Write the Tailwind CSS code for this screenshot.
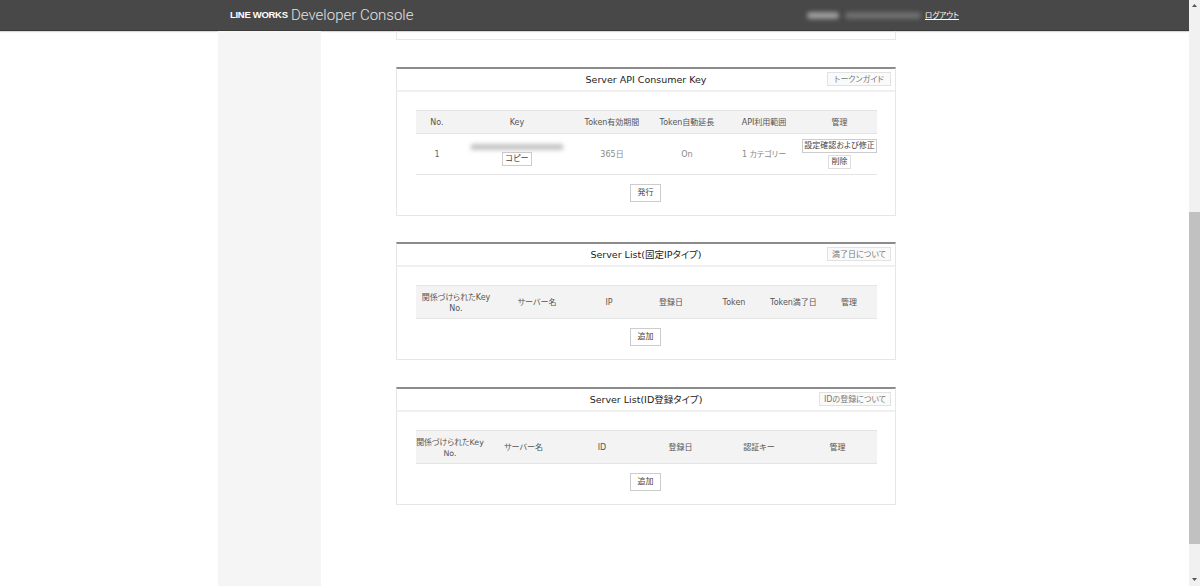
<!DOCTYPE html>
<html lang="ja">
<head>
    <meta charset="UTF-8">
    <title>LINE WORKS Developer Console</title>
    <script src="https://cdn.jsdelivr.net/npm/@tailwindcss/browser@4"></script>
</head>
<body class="bg-white overflow-hidden font-['DejaVu_Sans','Noto_Sans_CJK_JP',sans-serif] [font-feature-settings:'palt'] text-[8px] text-[#666]">
<div class="flex h-[586px] w-[1200px] overflow-hidden">
    <div class="w-[1189px] flex flex-col">
        <!-- Header -->
        <header class="h-[31px] shrink-0 bg-[#484848] border-b border-[#3a3a3a] flex items-center pl-[230px] pr-[230px] shadow-[0_1px_1px_rgba(0,0,0,0.15)]">
            <span class="pt-px font-['Liberation_Sans',sans-serif] font-bold text-[9.5px] tracking-[-0.3px] text-white w-[61px] whitespace-nowrap">LINE WORKS</span>
            <span class="font-['Roboto',sans-serif] font-light text-[15px] text-[#e4e4e4] whitespace-nowrap">Developer Console</span>
            <span class="ml-auto mr-[6px] w-[32px] h-[7px] rounded-sm bg-[#9a9a9a] blur-[2px]"></span>
            <span class="mr-[4px] w-[76px] h-[7px] rounded-sm bg-[#6e6e6e] blur-[2px]"></span>
            <a class="pt-px text-[7.6px] text-white underline whitespace-nowrap">ログアウト</a>
        </header>

        <div class="flex flex-1 min-h-0">
            <!-- Sidebar -->
            <aside class="ml-[218px] w-[103px] shrink-0 bg-[#f5f5f5]"></aside>

            <main class="ml-[75px] w-[500px]">
                <!-- Tail of the card scrolled out of view -->
                <div class="h-[9px] border border-t-0 border-[#e6e6e6]"></div>

                <!-- Server API Consumer Key -->
                <section class="mt-[27px] h-[149px] border border-t-2 border-[#e6e6e6] border-t-[#8c8c8c]">
                    <div class="h-[23px] border-b-2 border-[#f0f0f0] flex items-center relative">
                        <h2 class="w-full pt-px text-center text-[9.5px] text-[#222]">Server API Consumer Key</h2>
                        <span class="absolute right-[4px] top-[3px] h-[14px] w-[64px] text-center leading-[13px] border border-[#e2e2e2] bg-[#fafafa] text-[#777]">トークンガイド</span>
                    </div>
                    <table class="ml-[19px] mt-[18px] w-[461px] table-fixed text-center">
                        <thead>
                            <tr class="h-[23px] bg-[#f3f3f3] border-y border-[#e4e4e4] text-[#555]">
                                <th class="w-[42px] pt-px font-normal">No.</th>
                                <th class="w-[118px] pt-px font-normal">Key</th>
                                <th class="w-[72px] pt-px font-normal">Token有効期間</th>
                                <th class="w-[78px] pt-px font-normal">Token自動延長</th>
                                <th class="w-[76px] pt-px font-normal">API利用範囲</th>
                                <th class="w-[75px] pt-px font-normal">管理</th>
                            </tr>
                        </thead>
                        <tbody>
                            <tr class="h-[41px] border-b border-[#e4e4e4]">
                                <td class="pt-px">1</td>
                                <td class="pt-[2px]">
                                    <div class="mx-auto w-[92px] h-[6px] bg-[#c4c4c4] blur-[2px]"></div>
                                    <button class="mt-[2px] h-[14px] w-[30px] border border-[#ccc] text-[#444]">コピー</button>
                                </td>
                                <td class="pt-px text-[#888]">365日</td>
                                <td class="pt-px text-[#888]">On</td>
                                <td class="pt-px text-[#888]">1 カテゴリー</td>
                                <td class="pb-px">
                                    <button class="h-[14px] w-[75px] border border-[#ccc] text-[#444] whitespace-nowrap">設定確認および修正</button>
                                    <button class="mt-[2px] block mx-auto h-[14px] w-[23px] border border-[#ddd] text-[#444]">削除</button>
                                </td>
                            </tr>
                        </tbody>
                    </table>
                    <div class="mt-[9px] flex justify-center">
                        <button class="-ml-px h-[18px] w-[31px] border border-[#ccc] text-[#444]">発行</button>
                    </div>
                </section>

                <!-- Server List (fixed IP) -->
                <section class="mt-[26px] h-[118px] border border-t-2 border-[#e6e6e6] border-t-[#8c8c8c]">
                    <div class="h-[23px] border-b-2 border-[#f0f0f0] flex items-center relative">
                        <h2 class="w-full pt-px text-center text-[9.5px] text-[#222]">Server List(固定IPタイプ)</h2>
                        <span class="absolute right-[4px] top-[3px] h-[14px] w-[64px] text-center leading-[13px] border border-[#e2e2e2] bg-[#fafafa] text-[#777]">満了日について</span>
                    </div>
                    <table class="ml-[19px] mt-[18px] w-[461px] table-fixed text-center">
                        <thead>
                            <tr class="h-[33px] bg-[#f3f3f3] border-y border-[#e4e4e4] text-[#555] leading-[11px]">
                                <th class="w-[80px] pt-px font-normal">関係づけられたKey No.</th>
                                <th class="w-[82px] pt-px font-normal">サーバー名</th>
                                <th class="w-[62px] pt-px font-normal">IP</th>
                                <th class="w-[62px] pt-px font-normal">登録日</th>
                                <th class="w-[64px] pt-px font-normal">Token</th>
                                <th class="w-[55px] pt-px font-normal">Token満了日</th>
                                <th class="w-[56px] pt-px font-normal">管理</th>
                            </tr>
                        </thead>
                    </table>
                    <div class="mt-[9px] flex justify-center">
                        <button class="-ml-px h-[18px] w-[31px] border border-[#ccc] text-[#444]">追加</button>
                    </div>
                </section>

                <!-- Server List (ID) -->
                <section class="mt-[27px] h-[118px] border border-t-2 border-[#e6e6e6] border-t-[#8c8c8c]">
                    <div class="h-[23px] border-b-2 border-[#f0f0f0] flex items-center relative">
                        <h2 class="w-full pt-px text-center text-[9.5px] text-[#222]">Server List(ID登録タイプ)</h2>
                        <span class="absolute right-[4px] top-[3px] h-[14px] w-[72px] text-center leading-[13px] border border-[#e2e2e2] bg-[#fafafa] text-[#777]">IDの登録について</span>
                    </div>
                    <table class="ml-[19px] mt-[18px] w-[461px] table-fixed text-center">
                        <thead>
                            <tr class="h-[33px] bg-[#f3f3f3] border-y border-[#e4e4e4] text-[#555] leading-[11px]">
                                <th class="w-[68px] pt-px font-normal text-[7.9px] whitespace-nowrap">関係づけられたKey<br>No.</th>
                                <th class="w-[79px] pt-px font-normal">サーバー名</th>
                                <th class="w-[78px] pt-px font-normal">ID</th>
                                <th class="w-[79px] pt-px font-normal">登録日</th>
                                <th class="w-[78px] pt-px font-normal">認証キー</th>
                                <th class="w-[79px] pt-px font-normal">管理</th>
                            </tr>
                        </thead>
                    </table>
                    <div class="mt-[9px] flex justify-center">
                        <button class="-ml-px h-[18px] w-[31px] border border-[#ccc] text-[#444]">追加</button>
                    </div>
                </section>
            </main>
        </div>
    </div>

    <!-- Scrollbar -->
    <div class="w-[11px] bg-[#f1f1f1] flex flex-col items-center">
        <svg class="mt-[4px] shrink-0" width="5" height="3" viewBox="0 0 5 3"><path d="M2.5 0 5 3H0z" fill="#555"/></svg>
        <div class="mt-[205px] w-full h-[332px] bg-[#c1c1c1]"></div>
        <svg class="mt-[34px] shrink-0" width="5" height="3" viewBox="0 0 5 3"><path d="M0 0h5L2.5 3z" fill="#555"/></svg>
    </div>
</div>
</body>
</html>
